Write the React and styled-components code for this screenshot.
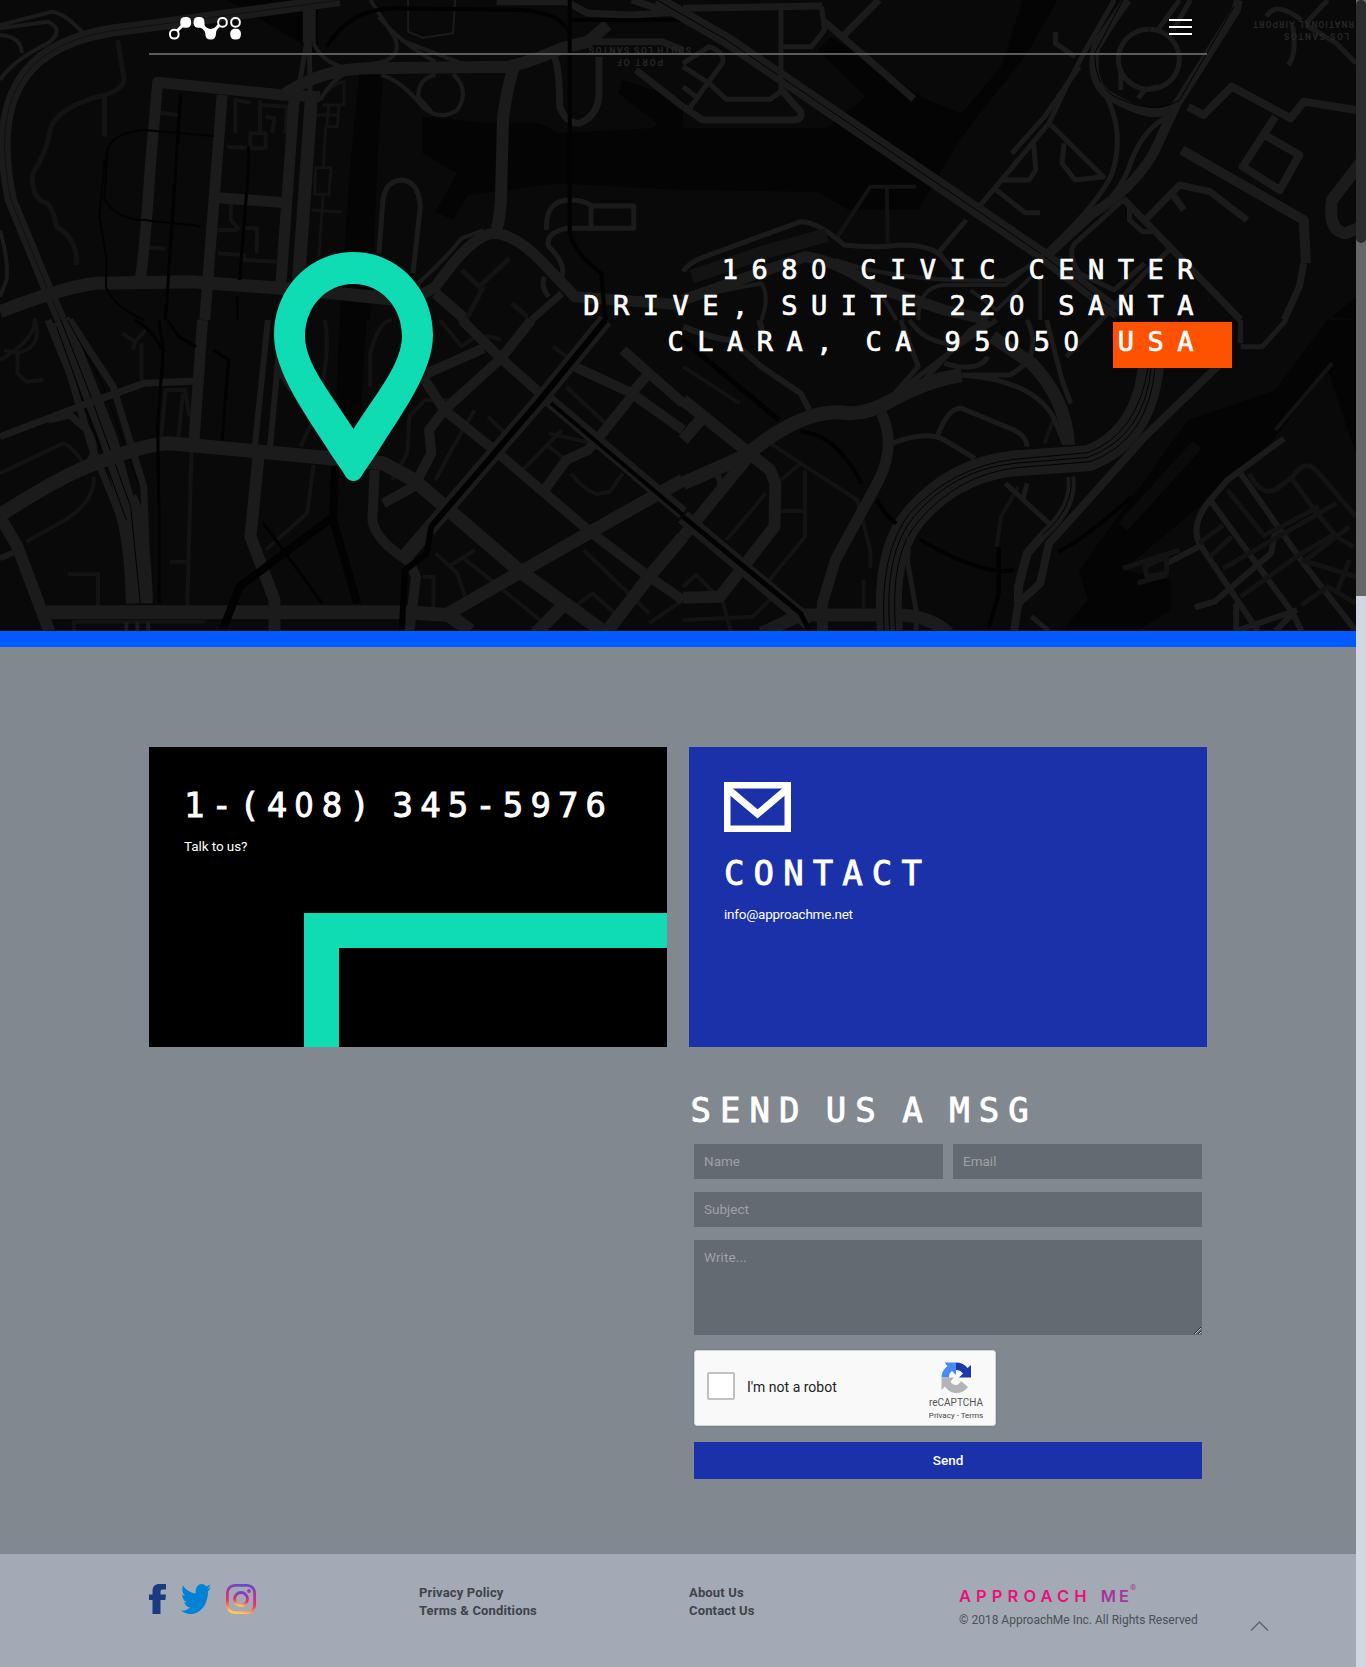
import React from "react";
import styled, { createGlobalStyle } from "styled-components";
import { FaTwitter } from "react-icons/fa";

const mono = `"DejaVu Sans Mono", "Liberation Mono", monospace`;
const sans = `Roboto, "Noto Sans", sans-serif`;

const GlobalStyle = createGlobalStyle`
  * { box-sizing: border-box; }
  body { margin: 0; background: #82888f; font-family: ${sans}; overflow: hidden; }
`;

const Page = styled.div`
  display: grid;
  grid-template-columns: 1356px 10px;
  width: 1366px;
  height: 1667px;
  overflow: hidden;
`;

const Content = styled.div`
  display: flex;
  flex-direction: column;
  min-width: 0;
`;

const ScrollTrack = styled.div`
  background: linear-gradient(#666 0 596px, #d3d7e1 596px);
`;

const ScrollThumb = styled.div`
  height: 243px;
  border-radius: 5px;
  background: #2c2c2c;
`;

const Hero = styled.section`
  position: relative;
  height: 647px;
  border-bottom: 16px solid #005aff;
  background: #090909;
  overflow: hidden;
`;

const MapCanvas = styled.svg`
  position: absolute;
  inset: 0;
  path { fill: none; vector-effect: non-scaling-stroke; stroke-linejoin: round; }
`;

const HeroInner = styled.div`
  position: relative;
  width: 1058px;
  margin-left: 149px;
`;

const TopBar = styled.header`
  display: flex;
  justify-content: space-between;
  height: 55px;
  padding: 17px 15px 0 20px;
  border-bottom: 2px solid #5c5c5c;
`;

const MenuButton = styled.div`
  display: flex;
  flex-direction: column;
  gap: 5px;
  width: 23px;
  padding-top: 2px;
`;

const MenuLine = styled.span`
  height: 2px;
  background: #fff;
`;

const HeroBody = styled.div`
  display: flex;
  justify-content: space-between;
  padding: 197px 0 0 125px;
`;

const Address = styled.div`
  text-align: right;
  white-space: nowrap;
  color: #fff;
  font: 400 27px/36px ${mono};
  letter-spacing: 13.5px;
  word-spacing: -10.3px;
  -webkit-text-stroke: 0.7px #fff;
`;

const Zero = styled.span`
  font-family: "DejaVu Sans Condensed", "DejaVu Sans", sans-serif;
  font-stretch: condensed;
  margin-right: 0.03em;
`;

const Highlight = styled.span`
  display: inline-block;
  height: 46px;
  margin: -2px -25px -8px 0;
  padding: 2px 25px 0 5px;
  vertical-align: top;
  background: #ff5200;
`;

const Main = styled.main`
  height: 907px;
  padding: 100px 149px 0;
`;

const Cards = styled.div`
  display: grid;
  grid-template-columns: 518px 518px;
  gap: 22px;
  height: 300px;
`;

const Card = styled.article`
  display: flex;
  flex-direction: column;
  padding: ${(p) => p.$top}px 0 0 35px;
  background: ${(p) => p.$bg};
`;

const Corner = styled.div`
  align-self: flex-end;
  width: 363px;
  flex: 1;
  margin-top: ${(p) => p.$gap}px;
  border-top: 35px solid #0fdcb3;
  border-left: 35px solid #0fdcb3;
`;

const Title = styled.h2`
  margin: 0;
  height: 40px;
  color: #fff;
  white-space: nowrap;
  font: 400 34px/40px ${mono};
  letter-spacing: ${(p) => p.$ls}px;
  word-spacing: -12px;
  text-indent: ${(p) => p.$indent || 0}px;
  -webkit-text-stroke: 0.9px #fff;
`;

const CardText = styled.p`
  margin: 12px 0 0;
  color: #fff;
  font-size: 13.5px;
  line-height: 18px;
  letter-spacing: ${(p) => p.$ls || 0}px;
`;

const Envelope = styled.svg`
  display: block;
  margin-bottom: 21px;
`;

const FormArea = styled.section`
  width: 518px;
  margin-left: 540px;
  padding-top: 43px;
`;

const Form = styled.form`
  display: grid;
  grid-template-columns: 249px 249px;
  gap: 13px 10px;
  padding: 14px 5px 0;
`;

const Field = styled.input`
  height: 35px;
  grid-column: ${(p) => (p.$wide ? "1 / -1" : "auto")};
  border: 0;
  padding: 0 10px 2px;
  background: #646a71;
  font: 400 13.5px ${sans};
  &::placeholder { color: #a0a1a3; opacity: 1; }
`;

const TextField = styled.textarea`
  grid-column: 1 / -1;
  height: 95px;
  border: 0;
  padding: 8px 10px;
  background: #646a71;
  font: 400 13.5px/18px ${sans};
  letter-spacing: 0.1px;
  resize: vertical;
  &::placeholder { color: #a0a1a3; opacity: 1; }
`;

const Captcha = styled.div`
  display: flex;
  width: 302px;
  height: 76px;
  margin-top: 2px;
  padding-left: 12px;
  border: 1px solid #d3d3d3;
  border-radius: 3px;
  background: #f9f9f9;
  box-shadow: 0 0 2px rgba(0, 0, 0, 0.15);
`;

const CheckBox = styled.span`
  width: 28px;
  height: 28px;
  margin-top: 21px;
  border: 2px solid #c1c1c1;
  border-radius: 2px;
  background: #fff;
`;

const CaptchaLabel = styled.span`
  flex: 1;
  padding: 27px 0 0 12px;
  color: #222;
  font: 400 14px/18px Roboto, sans-serif;
`;

const CaptchaBrand = styled.div`
  display: flex;
  flex-direction: column;
  align-items: center;
  width: 54px;
  margin-right: 12px;
  padding-top: 11px;
  color: #555;
  font: 400 10px/12px Roboto, sans-serif;
  white-space: nowrap;
`;

const BrandLabel = styled.span`
  margin-top: 3px;
`;

const Legal = styled.span`
  margin-top: 1px;
  color: #444;
  font-size: 8px;
`;

const SendButton = styled.button`
  grid-column: 1 / -1;
  height: 37px;
  margin-top: 3px;
  padding: 0 0 2px;
  border: 0;
  color: #fff;
  background: #1a31aa;
  font: 500 13.5px ${sans};
`;

const Footer = styled.footer`
  display: grid;
  grid-template-columns: repeat(3, 270px) 291px auto;
  height: 113px;
  padding: 30px 0 0 149px;
  background: #a3a9b5;
`;

const Social = styled.div`
  display: flex;
  align-items: flex-start;
`;

const SocialSlot = styled.span`
  display: flex;
  margin-right: ${(p) => p.$after}px;
`;

const Links = styled.nav`
  display: flex;
  flex-direction: column;
  color: #3f434a;
  font: 700 13px/18px ${sans};
  letter-spacing: 0.15px;
`;

const Brand = styled.div`
  display: flex;
  height: 27px;
  color: #e6127a;
  font: 600 16.5px/25px Inter, ${sans};
  letter-spacing: 5.1px;
`;

const BrandMe = styled.span`
  margin-left: 9px;
  color: #a5359b;
  letter-spacing: 3px;
`;

const Registered = styled.sup`
  font: 400 8px/8px ${sans};
  color: #a5359b;
  letter-spacing: 0;
  margin-left: -2px;
`;

const Copyright = styled.div`
  color: #4c5058;
  font-size: 12px;
  line-height: 18px;
`;

const ToTop = styled.svg`
  margin-top: 36px;
`;

const SLASH = "#1b1b1b";
const DIM = "#131313";
const INK = "#020202";
const SEA = "#040404";

/* Each tile lists [stroke, width, path] in its own coordinate space. */
const tiles = [
  {
    at: "translate(0 0) scale(.43558 .33333)",
    water: "M825 220L880 220L870 400L850 960H780L805 480ZM970 350V460L1050 520L1000 635L1040 660L1075 585L1280 550L1568 570V300L1430 240L1420 280L1510 370L1500 385L1280 400L1240 370H1120ZM520 0H730V160L600 60Z",
    roads: [
      [DIM, 5, "M270 120L285 240Q280 270 240 285Q130 320 115 390Q110 450 75 520Q70 600 110 610Q125 640 130 680Q180 720 175 795M240 285V410"],
      [DIM, 4, "M365 338L410 345M340 742L380 746M520 440L590 445M540 400V300L575 308M597 300V400M575 400H610V445H575ZM610 350L630 355L625 400M600 315L660 320L655 400M500 690L545 690M530 610V660L550 690M590 760V685H560M500 760L560 765L560 780L640 785"],
      [DIM, 3, "M735 300Q760 250 790 245V315H740M755 315L750 380H775L778 315M725 345H775M748 380L742 500M725 503H760L755 583H722ZM742 583L732 770M715 630L785 636"],
      [SLASH, 12, "M780 0L300 85Q100 110 40 260Q-10 380 25 600L110 870L140 960"],
      ["#101010", 1, "M780 0L300 85Q100 110 40 260Q-10 380 25 600L110 870L140 960"],
      [SLASH, 4, "M0 75L120 35Q150 40 195 105M0 85L110 65Q150 90 110 130Q30 180 0 240M0 105Q50 110 50 160M0 690Q20 780 15 840L0 890"],
      [SLASH, 11, "M320 845Q330 800 345 500L362 247L650 285L735 290M470 960L510 285M500 593L655 608M645 850L675 300"],
      [SLASH, 13, "M685 850L715 290M710 20V130"],
      [SLASH, 5, "M705 120L685 270M710 120L712 280"],
      [SLASH, 12, "M650 285Q740 205 850 205L1170 200Q1230 180 1290 145L1350 125L1395 75M1180 200Q1165 260 1155 350L1150 600Q1145 700 1130 700"],
      [SLASH, 13, "M0 935Q150 860 220 850L440 845L700 870L960 905"],
      [SLASH, 11, "M960 890L1000 860Q1080 710 1130 700Q1180 700 1240 780L1320 890L1568 915M1000 880L1070 960"],
      [SLASH, 4, "M960 850Q1020 780 1060 715L1110 690M875 225Q920 240 970 320Q1010 365 1050 330Q1080 270 1040 222M1000 225Q960 235 960 290L990 335M720 130Q740 190 800 205L880 185Q930 160 900 100L850 0M870 50Q920 130 1000 185M920 120L1060 190M735 300Q760 240 800 215"],
      [SLASH, 2, "M937 0V95L970 113L1040 100L1045 0"],
      [SLASH, 5, "M948 820L965 620Q960 540 920 540Q880 545 878 620L870 760M1255 690Q1250 600 1310 600Q1340 600 1360 618H1455V685H1300Q1250 700 1260 740Q1300 790 1290 830M1357 618V685M1250 830Q1240 860 1260 890"],
      [SLASH, 7, "M1270 160Q1285 200 1285 320Q1300 370 1330 370Q1370 350 1375 290V170M1365 125H1520L1568 150M1460 210L1568 320M1140 5H1300L1350 40L1450 45L1568 35M1450 0L1568 50M1290 880L1220 960"],
      [DIM, 5, "M1060 810L1100 860L1170 775M1110 860L1070 960M1175 910L1210 950"],
      [INK, 4, "M1308 0V700Q1320 760 1380 820L1390 960M750 140Q800 30 900 25L1200 30Q1290 40 1308 100M1310 60H1568"],
      [INK, 3, "M415 280L380 960M570 440L572 480L550 840"],
      [INK, 2, "M490 408L330 390Q240 400 245 480L240 600Q270 660 330 660L460 678M240 480L228 650L245 780L243 860Q260 920 330 960M545 890V960"],
    ],
  },
  {
    at: "translate(683 0) scale(.43558 .33333)",
    water: "M780 0H860L790 160L640 410L590 520L540 630H380L310 575L0 570V385H330L420 290L310 150L340 110L560 300L640 340L730 200ZM1545 890L1490 950L1545 960Z",
    roads: [
      [SLASH, 14, "M-60 0L100 120L820 760L1000 940"],
      [INK, 1, "M-60 0L100 120L820 760L1000 940"],
      [SLASH, 7, "M0 25L320 18M325 65L530 297M370 105L450 0M225 268L270 335Q275 362 250 360H45L0 320"],
      [SLASH, 5, "M225 20V270M230 140H295L325 90L318 20M0 200L60 250L100 298H200L225 275M0 190L60 140Q100 160 90 190L15 325M0 260L30 290"],
      [SLASH, 5, "M990 0L920 160L880 260L840 370L680 620M650 660L585 760M1020 0L955 140M1140 0L1090 90M1165 0L1125 90M1070 88A70 90 0 1 1 1069 88M1045 295L1060 270L1090 260M1005 220V270"],
      [SLASH, 9, "M1020 0L950 130Q930 230 970 280Q1080 370 1130 320L1270 30L1275 0"],
      [INK, 1, "M1010 0L945 160Q945 250 985 285Q1080 350 1140 300L1265 20"],
      [SLASH, 10, "M1130 320L1080 460Q1030 570 940 640L840 760M1145 450L1425 660L1430 790"],
      [SLASH, 5, "M955 250Q1020 380 985 520Q960 600 840 750M1120 345Q1060 380 1030 480Q1010 570 940 650M755 460L830 350L910 200M900 170L855 130V95M845 375L965 530L900 540L870 490L875 430M805 430L810 510L795 540H730M715 565L785 638H820"],
      [SLASH, 8, "M1160 320L1195 345L1260 260L1395 355L1425 305L1545 330M1360 350L1285 500L1370 570L1415 465L1335 405"],
      [SLASH, 12, "M1560 480L1490 600Q1480 690 1520 700L1560 680"],
      [SLASH, 7, "M1065 655L1140 555L1210 575L1295 660M1125 585L1150 630M1010 595L1280 960M1425 790L1415 860L1380 960"],
      [SLASH, 5, "M1025 610V660L1055 695H1085M1010 600L900 730Q880 760 910 820L990 870L1060 790M1120 745L1060 820L960 960"],
      [SLASH, 5, "M0 815Q10 790 50 770L270 665Q310 665 370 735Q440 745 500 735Q580 735 600 780L640 840M1400 80Q1410 160 1390 195M1420 60Q1360 0 1340 50M1430 70L1480 0M1430 75L1500 130L1545 190"],
      [DIM, 4, "M355 710L430 560H535M468 560L470 730"],
      [DIM, 14, "M20 830L190 755L330 705"],
      [SLASH, 11, "M0 900L280 770Q350 780 440 860L600 930L700 960"],
      [SLASH, 4, "M350 780Q500 850 740 840L830 770M540 960Q540 860 600 855L740 855L840 750M660 870L720 930L800 830M60 880L180 850Q200 890 180 960M440 850L490 960M820 830V960"],
    ],
  },
  {
    at: "translate(0 320) scale(.43558 .33333)",
    water: "M780 0H842L825 310H770Z",
    roads: [
      [DIM, 4, "M0 120Q80 60 80 0Q100 80 40 100L10 90M40 100V160L60 185L100 180M280 40L310 65L335 30M310 65L305 90M325 70V180M0 460L145 370Q170 380 200 450M215 470Q220 540 150 600L60 665M370 350L380 210H430M410 350L420 220M435 290L425 210M440 370L430 857M390 725H430M155 763H225V857M170 933V905H470M720 435L705 580L610 690M690 380L740 240"],
      [DIM, 4, "M745 0Q760 80 735 220M850 200V100Q870 0 900 0M1010 0L1060 80Q1100 30 1150 60M1060 240L975 240L940 290L935 400L900 480M1120 290L1160 340M1090 270L1040 380L1000 480M1300 200L1390 310M1270 80L1310 120L1190 310M1290 330L1200 450M1310 460Q1340 510 1370 522L1400 515L1430 460M1260 380L1300 420M1260 340L1360 370M1000 700L1050 760L1070 840M1060 710L1240 900M1090 690L1030 740M970 770H995V870M1340 690L1490 880M1320 860L1360 820L1420 890M1568 840L1490 910"],
      [SLASH, 7, "M110 0L160 160L210 380L280 600M160 0L260 200L330 500L340 850"],
      [SLASH, 27, "M285 540Q315 620 320 850"],
      [SLASH, 18, "M140 0L190 160L250 360L300 600"],
      [INK, 1, "M140 0L200 200L300 560L322 850M130 20L290 600M155 0L235 190L320 500"],
      [SLASH, 11, "M465 0L445 370"],
      [SLASH, 7, "M0 350L180 260L330 190L450 183M110 300L160 285L200 330Q230 400 200 430"],
      [SLASH, 14, "M0 585Q150 460 220 430Q340 370 390 370L600 395L880 430L950 480L1030 570L1190 750L1380 930M100 877H930L1030 885L1080 933"],
      [SLASH, 12, "M0 590L40 680L115 940M595 390L575 650L630 840V933"],
      [SLASH, 6, "M615 0L585 380M645 30L620 380M0 715L45 690M640 150L670 210"],
      [SLASH, 10, "M860 450L855 600Q860 660 940 725L955 770L940 933M980 160L1110 85M1060 0L1150 115L1020 270L985 330L990 400L950 500L880 550M960 150L1020 270L1130 385L1350 630L1490 770L1568 840M1220 0L1150 115L1240 220M1320 140L1450 220L1490 160L1430 90M1450 230L1370 360L1350 390L1300 420L1250 510M1450 220L1568 330M1490 160L1568 250"],
      [SLASH, 13, "M1030 880L1350 640L1568 480M1568 650L1490 770L1390 940M1290 860L1230 940"],
      [SLASH, 15, "M1390 0L1240 240L930 710"],
      [INK, 6, "M1390 0L1240 240L990 620L980 700L930 750L922 933"],
      [SLASH, 13, "M1260 240L1568 580"],
      [INK, 4, "M1265 250L1568 585"],
      [INK, 3, "M365 0L375 90L362 310L365 600L365 850M385 0L410 50L450 80M490 90L525 120L510 360M310 0Q360 40 370 90M605 610L740 850"],
      [INK, 8, "M770 440L765 590L550 800L510 933M765 600L820 850"],
      [SLASH, 4, "M290 905V933M315 905V933M340 905V933"],
    ],
  },
  {
    at: "translate(683 320) scale(.43558 .33333)",
    water: "M1480 0L1440 70L1360 210L1160 300L1060 480L910 750L930 840L870 933H1040L1120 870V780L1010 750L1330 400L1480 150L1545 400V0Z",
    roads: [
      [DIM, 4, "M0 140L130 250M200 370L400 540L430 690V745M280 450V650L180 810M225 480L270 430M225 573H275M190 520L100 660M0 800L30 765L80 830M0 900L160 890L215 820M90 840L110 933M415 780V900M350 730L340 780M850 300L830 370M770 500L730 590L720 680"],
      [SLASH, 12, "M0 240L200 450L212 490L210 620L85 830L0 833M150 410L0 650M0 360L40 300"],
      [SLASH, 14, "M0 490L140 410L190 360Q300 260 380 280Q430 280 480 240Q560 180 640 165"],
      [SLASH, 11, "M455 280Q490 370 450 480L350 720L320 850V933"],
      [SLASH, 13, "M180 940L270 885H500Q570 890 610 940"],
      [SLASH, 6, "M0 20Q80 60 110 60L180 140L270 220L290 270M60 450Q90 460 85 510M175 0L190 70"],
      [SLASH, 26, "M475 933Q460 700 530 590Q620 450 760 430L930 415Q1060 350 1075 130"],
      [INK, 1, "M462 933Q450 700 520 580Q620 440 760 418L930 398Q1045 340 1068 140M488 933Q474 700 540 605Q630 465 765 443L935 425Q1070 360 1084 140M475 933Q460 700 530 590Q620 450 760 430L930 412Q1060 350 1075 140"],
      [SLASH, 5, "M500 0L540 140L480 230M640 165L750 165Q830 110 790 0M640 165Q800 180 850 290L875 370M520 0Q560 80 640 70L720 0M540 200L660 30L700 0M480 230L620 90L700 0M600 130Q680 160 700 110M480 370Q560 330 600 360L670 415M585 345Q610 260 640 265L760 330Q790 350 790 380M740 490L840 610M790 490L780 540M520 650L515 720L535 870V933M800 890L840 933M880 110L960 0M835 0L870 180L890 250M1280 0V70M1280 80H1330L1385 0"],
      [SLASH, 13, "M710 50L800 130Q880 240 885 375"],
      [SLASH, 8, "M1250 110L1060 350L930 540L840 670L820 790L770 850L760 933"],
      [SLASH, 9, "M890 470Q900 560 830 640L790 700L770 800V850"],
      [INK, 1, "M890 470Q900 560 825 645"],
      [SLASH, 6, "M1380 355L1250 480L1210 540Q1160 620 1190 680L1320 933M1175 862L1220 845L1350 700L1360 630M1210 540L1400 880L1420 933M1280 460L1430 740L1545 933M1400 880L1360 933M1270 850V933L1410 870M1110 730L1185 680"],
      [DIM, 5, "M1300 460Q1330 540 1370 500L1400 470Q1430 410 1460 460L1545 590M1400 480L1450 570L1500 650L1540 680M1240 745L1500 550M1280 830L1420 700L1500 640M1185 670L1240 615M1210 710L1260 650M1250 510L1330 640M1420 720L1545 770M1420 855L1480 800L1545 850M1430 720L1530 620M1330 650L1460 560M1060 740L1110 710V760L1065 770ZM1040 790L1110 765M1010 745L1140 690M1530 720L1500 820"],
      [SLASH, 15, "M0 590L290 910"],
      [INK, 5, "M0 60L220 300M0 590L270 880L290 933"],
      [INK, 4, "M270 335Q350 340 410 490M445 540Q465 590 490 610M545 660Q690 770 760 750M860 695Q910 670 1030 530M725 680V820L700 933"],
      ["#0a0a0a", 12, "M1180 375L1010 620"],
      [DIM, 4, "M1490 130L1360 330"],
      [SEA, 3, "M1040 820V780M1060 840V800M1080 840V800M1100 840V800M910 760L950 770M920 800L960 820"],
    ],
  },
];

const MapArt = () => (
  <MapCanvas width="1356" height="631" viewBox="0 0 1356 631">
    {tiles.map((t) => (
      <g key={t.at} transform={t.at}>
        <path d={t.water} style={{ fill: SEA }} />
      </g>
    ))}
    {tiles.map((t) => (
      <g key={t.at} transform={t.at}>
        {t.roads.map(([stroke, width, d]) => (
          <path key={d} stroke={stroke} strokeWidth={width} d={d} />
        ))}
      </g>
    ))}
    <g fill="#262626" fontFamily="Roboto, sans-serif" fontSize="8.5" fontWeight="700">
      <text transform="translate(663 59) rotate(180)" textLength="46">PORT OF</text>
      <text transform="translate(691 47) rotate(180)" textLength="102">SOUTH LOS SANTOS</text>
      <text transform="translate(1349 33) rotate(180)" textLength="65">LOS SANTOS</text>
      <text transform="translate(1354 21) rotate(180)" textLength="101">RNATIONAL AIRPORT</text>
    </g>
  </MapCanvas>
);

const Logo = () => (
  <svg width="72" height="23" viewBox="0 0 72 23">
    <path stroke="#fff" strokeWidth="3" d="M8 14L14 8" />
    <g fill="#fff">
      <rect x="11.300" y="0" width="10.800" height="10.800" rx="4.500" />
      <rect x="24.600" y="0" width="10.800" height="10.800" rx="4.500" />
      <path d="M35 6Q35.500 11 41.500 12Q46 11.500 48.500 7.500L51 10Q47 12 47 16.500Q47 22.500 41.700 22.500Q36.300 22.500 36.300 17Q36.500 13 31 10.500Z" />
      <rect x="61.300" y="11.800" width="10.600" height="10.800" rx="4.500" />
    </g>
    <g fill="none" stroke="#fff" strokeWidth="2">
      <rect x="1" y="12.800" width="8.600" height="8.800" rx="4" />
      <rect x="49.200" y="1" width="8.600" height="8.800" rx="4" />
      <rect x="62.200" y="1" width="8.600" height="8.800" rx="4" />
    </g>
  </svg>
);

const Pin = () => (
  <svg width="160" height="229" viewBox="0 0 160 229">
    <path
      fill="#0fdcb3"
      fillRule="evenodd"
      d="M79.500 0C124 0 159 37 159 83C159 119 129 160 108 193C99 208 92 216 87 225Q84 229 79.500 229Q75 229 72 225C67 216 60 208 51 193C30 160 0 119 0 83C0 37 35 0 79.500 0ZM79.500 32C52 32 31 55 31 84C31 112 58 143 79.500 177C101 143 128 112 128 84C128 55 107 32 79.500 32Z"
    />
  </svg>
);

const Recaptcha = () => (
  <svg width="31" height="32" viewBox="0 0 31 32">
    <path fill="#1c3aa9" d="M15 0.500C20 0.500 24 2.500 26.500 6L30 3V15.500H18L22 11.500C20 9 18 8 15 8Z" />
    <path fill="#4a8af4" d="M15 0.500H3.500L6.500 4C3 7 0.500 10.500 0.500 15.500H8C8 12 9 10.500 11 9L15 13Z" />
    <path fill="#b4b4b4" d="M0.500 15.500V28L4 24.500C7 29 11 31 15 31C20 31 24 29 27 25L20 19C19 21 17 23 15 23C12 23 10.500 21.500 9.500 19.500L13 15.500Z" />
  </svg>
);

const InstagramIcon = () => (
  <svg width="30" height="30" viewBox="0 0 30 30" fill="none">
    <defs>
      <linearGradient id="ig" x1=".6" y1="0" x2=".4" y2="1">
        <stop offset="0" stopColor="#6a48cc" />
        <stop offset=".35" stopColor="#c32f92" />
        <stop offset=".65" stopColor="#ef3560" />
        <stop offset="1" stopColor="#ffc65c" />
      </linearGradient>
    </defs>
    <g stroke="url(#ig)" strokeWidth="2.800">
      <rect x="1.400" y="1.400" width="27.200" height="27.200" rx="7.500" />
      <circle cx="15" cy="15" r="6.500" />
    </g>
    <circle cx="23" cy="7" r="1.900" fill="#bd3097" />
  </svg>
);

const withPlainZeros = (text) =>
  text.split(/(0)/).map((part, i) => (part === "0" ? <Zero key={i}>0</Zero> : part));

export default function App() {
  return (
    <Page>
      <GlobalStyle />
      <Content>
        <Hero>
          <MapArt />
          <HeroInner>
            <TopBar>
              <Logo />
              <MenuButton>
                <MenuLine />
                <MenuLine />
                <MenuLine />
              </MenuButton>
            </TopBar>
            <HeroBody>
              <Pin />
              <Address>
                <div>{withPlainZeros("1680 CIVIC CENTER")}</div>
                <div>{withPlainZeros("DRIVE, SUITE 220 SANTA")}</div>
                <div>
                  {withPlainZeros("CLARA, CA 95050 ")}
                  <Highlight>USA</Highlight>
                </div>
              </Address>
            </HeroBody>
          </HeroInner>
        </Hero>
        <Main>
          <Cards>
            <Card $bg="#000" $top={38}>
              <Title $ls={7.1}>{withPlainZeros("1-(408) 345-5976")}</Title>
              <CardText $ls={-0.08}>Talk to us?</CardText>
              <Corner $gap={58} />
            </Card>
            <Card $bg="#1a31aa" $top={35}>
              <Envelope width="67" height="50" viewBox="0 0 67 50" fill="none" stroke="#fff">
                <rect x="3.250" y="3.250" width="60.500" height="43.500" strokeWidth="6.500" />
                <path d="M4 7L33.500 32L63 7" strokeWidth="7" />
              </Envelope>
              <Title $ls={9.1}>CONTACT</Title>
              <CardText $ls={-0.24}>info@approachme.net</CardText>
            </Card>
          </Cards>
          <FormArea>
            <Title $ls={9} $indent={1.5}>SEND US A MSG</Title>
            <Form>
              <Field placeholder="Name" />
              <Field placeholder="Email" />
              <Field $wide placeholder="Subject" />
              <TextField placeholder="Write..." />
              <Captcha>
                <CheckBox />
                <CaptchaLabel>I'm not a robot</CaptchaLabel>
                <CaptchaBrand>
                  <Recaptcha />
                  <BrandLabel>reCAPTCHA</BrandLabel>
                  <Legal>Privacy - Terms</Legal>
                </CaptchaBrand>
              </Captcha>
              <SendButton type="button">Send</SendButton>
            </Form>
          </FormArea>
        </Main>
        <Footer>
          <Social>
            <SocialSlot $after={15}>
              <svg width="17" height="30" viewBox="0 0 17 30">
                <path fill="#1b3a80" d="M3.500 30V16H0V10.500H3.500V7C3.500 2.500 6 0 10.500 0H17V5.500H13.500C12 5.500 11.500 6.500 11.500 8V10.500H17L16.300 16H11.500V30Z" />
              </svg>
            </SocialSlot>
            <SocialSlot $after={15}>
              <FaTwitter viewBox="0 48 512 416" preserveAspectRatio="none" size={30} color="#0083d4" />
            </SocialSlot>
            <SocialSlot $after={0}>
              <InstagramIcon />
            </SocialSlot>
          </Social>
          <Links>
            <span>Privacy Policy</span>
            <span>Terms &amp; Conditions</span>
          </Links>
          <Links>
            <span>About Us</span>
            <span>Contact Us</span>
          </Links>
          <div>
            <Brand>
              APPROACH<BrandMe>ME</BrandMe>
              <Registered>®</Registered>
            </Brand>
            <Copyright>© 2018 ApproachMe Inc. All Rights Reserved</Copyright>
          </div>
          <ToTop width="19" height="12" viewBox="0 0 19 12" fill="none" stroke="#62666e" strokeWidth="1.500">
            <path d="M1 10.500L9.500 2L18 10.500" />
          </ToTop>
        </Footer>
      </Content>
      <ScrollTrack>
        <ScrollThumb />
      </ScrollTrack>
    </Page>
  );
}
